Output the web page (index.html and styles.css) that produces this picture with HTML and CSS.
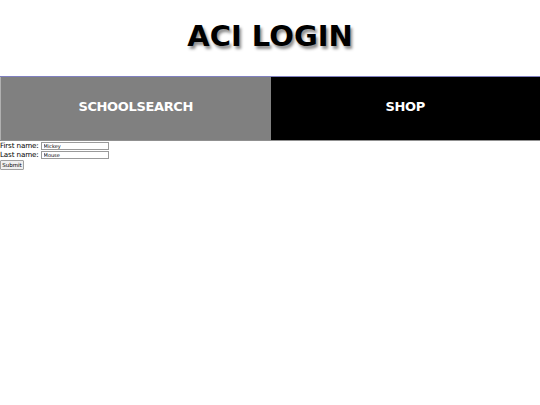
FILE: index.html
```html
<!DOCTYPE html>
<html>
<head>
<meta charset="utf-8">
<link rel="stylesheet" href="styles.css">
</head>
<body>
<header class="header"><h1 class="title">ACI LOGIN</h1></header>
<nav class="nav">
  <a class="nav-item nav-gray" href="#">SCHOOLSEARCH</a>
  <a class="nav-item nav-black" href="#">SHOP</a>
</nav>
<form class="form">
  <div class="row"><label class="label">First name:</label><input class="field" type="text" value="Mickey"></div>
  <div class="row"><label class="label">Last name:</label><input class="field" type="text" value="Mouse"></div>
  <button class="submit" type="button">Submit</button>
</form>
</body>
</html>
```
FILE: styles.css
```css
html, body { margin: 0; padding: 0; background: #fff; }
body { font-family: "DejaVu Sans", sans-serif; width: 540px; height: 405px; }
.header { height: 76px; display: flex; align-items: center; justify-content: center; }
.title { margin: 0 0 4px 0; font-size: 29px; font-weight: bold; color: #000; text-shadow: 2px 3px 3px rgba(0,0,0,0.45); line-height: 1; }
.nav { display: flex; border-top: 1px solid #8080c0; border-bottom: 1px solid #909090; height: 63px; }
.nav-item { flex: 1; display: flex; align-items: center; justify-content: center; padding-bottom: 4px; color: #fff; font-weight: bold; font-size: 13px; letter-spacing: -0.35px; text-decoration: none; }
.nav-gray { background: #808080; border-left: 1px solid #b0b0b0; }
.nav-black { background: #000; }
.form { font-size: 7.2px; letter-spacing: -0.15px; color: #000; }
.row { display: flex; align-items: center; height: 9px; }
.label { margin-right: 2px; line-height: 9px; }
.field { width: 62px; height: 6px; padding: 0 2px; border: 1px solid #9a9a9a; font-size: 5px; font-family: "DejaVu Sans", sans-serif; margin: 0; }
.submit { margin-top: 1px; font-size: 5.5px; height: 10px; width: 24px; padding: 0; border: 1px solid #a0a0a0; background: #efefef; font-family: "DejaVu Sans", sans-serif; border-radius: 1px; }
```
